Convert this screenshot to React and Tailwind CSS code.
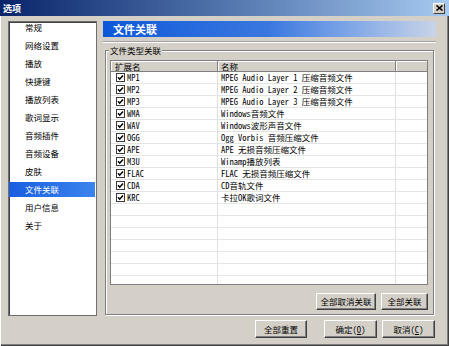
const navItems = [
  "常规",
  "网络设置",
  "播放",
  "快捷键",
  "播放列表",
  "歌词显示",
  "音频插件",
  "音频设备",
  "皮肤",
  "文件关联",
  "用户信息",
  "关于",
];

const fileTypes = [
  ["MP1", "MPEG Audio Layer 1 压缩音频文件"],
  ["MP2", "MPEG Audio Layer 2 压缩音频文件"],
  ["MP3", "MPEG Audio Layer 3 压缩音频文件"],
  ["WMA", "Windows音频文件"],
  ["WAV", "Windows波形声音文件"],
  ["OGG", "Ogg Vorbis 音频压缩文件"],
  ["APE", "APE 无损音频压缩文件"],
  ["M3U", "Winamp播放列表"],
  ["FLAC", "FLAC 无损音频压缩文件"],
  ["CDA", "CD音轨文件"],
  ["KRC", "卡拉OK歌词文件"],
];

const Button = ({ w, h, children }) => (
  <div
    className={`${w} ${h} flex items-center justify-center bg-[#d4d0c8] border border-t-white border-l-white border-r-[#404040] border-b-[#404040] shadow-[inset_-1px_-1px_0_#808080] text-[8.5px] leading-none text-black`}
  >
    {children}
  </div>
);

const CheckBox = () => (
  <svg width="9" height="9" viewBox="0 0 9 9" className="shrink-0">
    <rect x="0.5" y="0.5" width="8" height="8" fill="#fff" stroke="#3a3a3a" />
    <path d="M2 4.3 L3.7 6.2 L7 2.4" fill="none" stroke="#000" strokeWidth="1.5" />
  </svg>
);

export default function App() {
  return (
    <div className="w-[449px] h-[346px] bg-[#d4d0c8] flex flex-col overflow-hidden font-['Noto_Sans_Mono_CJK_SC','Noto_Sans_CJK_SC',monospace] text-[8.5px] text-black">
      {/* Title bar */}
      <div className="h-[16px] shrink-0 bg-gradient-to-r from-[#0a246a] to-[#a6caf0] flex items-center justify-between pl-[3px] pr-[4px]">
        <span className="text-white font-bold text-[9px] leading-none">选项</span>
        <div className="w-[12px] h-[11px] flex items-center justify-center bg-[#d4d0c8] border border-t-white border-l-white border-r-[#404040] border-b-[#404040]">
          <svg width="7" height="6" viewBox="0 0 7 6">
            <path d="M0.5 0.5 L6.5 5.5 M6.5 0.5 L0.5 5.5" stroke="#000" strokeWidth="1.6" />
          </svg>
        </div>
      </div>

      {/* Body */}
      <div className="flex-1 flex flex-col pl-[8px] pt-[5px] shadow-[inset_1px_0_0_#fff,inset_-1px_-1px_0_#404040,inset_-2px_-2px_0_#808080]">
        <div className="flex h-[295px]">
          {/* Nav list */}
          <div className="w-[89px] h-[295px] bg-white border border-[#6f6f6f] shadow-[inset_1px_1px_0_#404040] overflow-hidden">
            <div className="-mt-[2px] flex flex-col">
              {navItems.map((item) => (
                <div key={item} className="h-[18px] shrink-0">
                  <div
                    className={`h-[15px] leading-[15px] pl-[16px] mr-[1px] ${
                      item === "文件关联"
                        ? "bg-gradient-to-r from-[#1a5ee0] to-[#3a84ee] text-white"
                        : "text-black"
                    }`}
                  >
                    {item}
                  </div>
                </div>
              ))}
            </div>
          </div>

          {/* Right side */}
          <div className="ml-[6px] w-[333px] flex flex-col">
            <div className="h-[16px] shrink-0 bg-gradient-to-r from-[#0a58d8] via-[#3a78e0] to-[#c8d4e8] flex items-center pl-[10px]">
              <span className="text-white font-bold text-[11px] leading-none">文件关联</span>
            </div>
            <div className="mt-[4px] h-[2px] border-t border-t-[#a0a0a0] border-b border-b-white" />

            {/* Group box */}
            <div className="relative mt-[7px] ml-[2px] w-[329px] h-[265px] border border-[#808080] shadow-[inset_1px_1px_0_#fff,1px_1px_0_#fff] flex flex-col">
              <span className="absolute left-[3px] -top-[7px] px-[1px] bg-[#d4d0c8] leading-[12px]">文件类型关联</span>

              {/* List view */}
              <div className="mt-[9px] ml-[4px] w-[318px] h-[225px] bg-white border border-[#7f7f7f] overflow-hidden">
                <div className="flex h-[11px] bg-[#d4d0c8] border-b border-b-[#808080] leading-[10px]">
                  <div className="w-[107px] pl-[4px] border-r border-r-[#808080] shadow-[inset_1px_1px_0_#fff]">扩展名</div>
                  <div className="w-[178px] pl-[3px] border-r border-r-[#808080] shadow-[inset_1px_1px_0_#fff]">名称</div>
                  <div className="flex-1 shadow-[inset_1px_1px_0_#fff]" />
                </div>
                {Array.from({ length: 18 }).map((_, i) => {
                  const row = fileTypes[i];
                  return (
                    <div key={i} className="flex h-[12px] border-b border-b-[#e4e4e4] leading-[11px]">
                      <div className="w-[106px] flex items-center pl-[5px] gap-[2px]">
                        {row && <CheckBox />}
                        {row && <span>{row[0]}</span>}
                      </div>
                      <div className="w-[178px] border-l border-l-[#e0e0e0] pl-[3px] whitespace-nowrap">
                        {row && row[1]}
                      </div>
                      <div className="flex-1 border-l border-l-[#e0e0e0]" />
                    </div>
                  );
                })}
              </div>

              <div className="mt-[8px] ml-[4px] w-[318px] flex justify-end gap-[5px]">
                <Button w="w-[60px]" h="h-[17px]">全部取消关联</Button>
                <Button w="w-[47px]" h="h-[17px]">全部关联</Button>
              </div>
            </div>
          </div>
        </div>

        {/* Bottom buttons */}
        <div className="mt-[4px] flex justify-end pr-[14px]">
          <Button w="w-[52px]" h="h-[18px]">全部重置</Button>
          <div className="w-[17px]" />
          <Button w="w-[53px]" h="h-[18px]">
            确定(<span className="underline">O</span>)
          </Button>
          <div className="w-[5px]" />
          <Button w="w-[53px]" h="h-[18px]">
            取消(<span className="underline">C</span>)
          </Button>
        </div>
      </div>
    </div>
  );
}
